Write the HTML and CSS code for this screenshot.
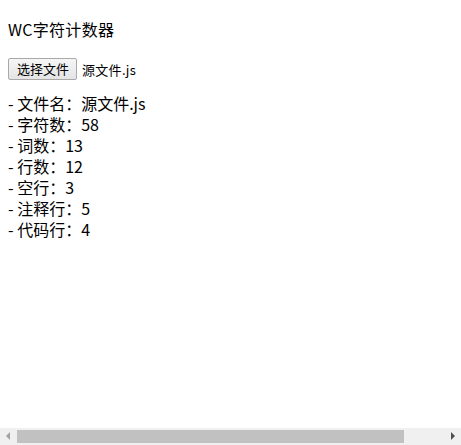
FILE: index.html
```html
<!DOCTYPE html>
<html lang="zh-CN">
<head>
<meta charset="utf-8">
<title>WC字符计数器</title>
<link rel="stylesheet" href="styles.css">
</head>
<body>
<div class="page">
  <p class="title">WC字符计数器</p>
  <div class="picker">
    <button class="pick-btn" type="button">选择文件</button>
    <span class="pick-name">源文件.js</span>
  </div>
  <div class="result">
    <div class="row">- 文件名：源文件.js</div>
    <div class="row">- 字符数：58</div>
    <div class="row">- 词数：13</div>
    <div class="row">- 行数：12</div>
    <div class="row">- 空行：3</div>
    <div class="row">- 注释行：5</div>
    <div class="row">- 代码行：4</div>
  </div>
</div>
<div class="hscroll">
  <span class="arrow arrow-left"></span>
  <div class="track"><div class="thumb"></div></div>
  <span class="arrow arrow-right"></span>
</div>
</body>
</html>
```

FILE: styles.css
```css
html, body {
  margin: 0;
  padding: 0;
  background: #ffffff;
  overflow: hidden;
}
body {
  font-family: "Noto Sans CJK SC", "Noto Sans", sans-serif;
  font-size: 16px;
  line-height: 21px;
  color: #000000;
}
.page {
  padding: 8px;
}
.title {
  margin: 11px 0 18px 0;
  letter-spacing: 0.3px;
}
.picker {
  display: flex;
  align-items: center;
  gap: 5px;
  height: 22px;
}
.pick-btn {
  font-family: "Noto Sans CJK SC", sans-serif;
  font-size: 13px;
  line-height: 16px;
  height: 22px;
  padding: 1px 7px 1px 8px;
  margin: 0;
  color: #000;
  background: linear-gradient(#f6f6f6, #e4e4e4);
  border: 1px solid #a9a9a9;
  border-radius: 2px;
}
.pick-name {
  font-size: 13px;
  letter-spacing: 0.3px;
}
.result {
  margin-top: 13px;
}
.hscroll {
  position: fixed;
  left: 0;
  right: 0;
  bottom: 0;
  height: 17px;
  background: #f0f0f0;
  display: flex;
  align-items: center;
}
.track {
  flex: 1;
  height: 17px;
  display: flex;
  align-items: center;
}
.thumb {
  width: 387px;
  height: 13px;
  background: #c1c1c1;
}
.arrow {
  width: 17px;
  height: 17px;
  position: relative;
}
.arrow-left::before,
.arrow-right::before {
  content: "";
  position: absolute;
  top: 4px;
  width: 0;
  height: 0;
  border-top: 4px solid transparent;
  border-bottom: 4px solid transparent;
}
.arrow-left::before {
  left: 6px;
  border-right: 4px solid #a3a3a3;
}
.arrow-right::before {
  left: 7px;
  border-left: 4px solid #505050;
}
```
